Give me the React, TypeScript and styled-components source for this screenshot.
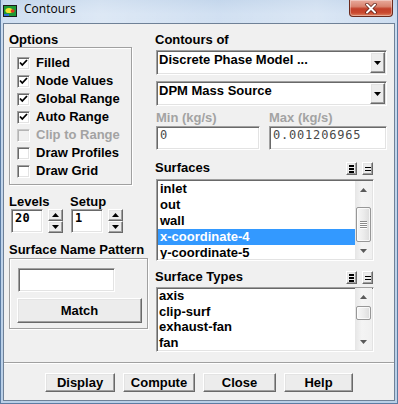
import React from 'react';
import styled, { createGlobalStyle, css } from 'styled-components';

const GlobalStyle = createGlobalStyle`
  html, body {
    margin: 0;
    padding: 0;
    background: #ffffff;
  }
  body {
    font-family: "Liberation Sans", Arial, sans-serif;
  }
  *, *::before, *::after {
    box-sizing: border-box;
  }
`;

// classic 3D edges
const sunken = css`
  border: 1px solid;
  border-color: #a0a0a0 #ffffff #ffffff #a0a0a0;
  box-shadow: inset 1px 1px 0 #696969, inset -1px -1px 0 #e3e3e3;
`;

const raised = css`
  border: 1px solid;
  border-color: #ffffff #696969 #696969 #ffffff;
  box-shadow: inset -1px -1px 0 #a0a0a0, inset 1px 1px 0 #e3e3e3;
  background: #ececec;
`;

const Window = styled.div`
  width: 398px;
  height: 404px;
  display: flex;
  flex-direction: column;
  padding: 0 2px 2px 2px;
  border: 1px solid #5b7ca3;
  border-top: none;
  background: linear-gradient(180deg, #bcd1e9 0%, #cbdcf0 14px, #c2d5eb 40%, #b9cfe7 100%);
`;

const TitleBar = styled.div`
  height: 23px;
  flex-shrink: 0;
  display: flex;
  align-items: flex-start;
  background: linear-gradient(
    90deg,
    rgba(255, 255, 255, 0.1) 0%,
    rgba(255, 255, 255, 0.35) 25%,
    rgba(255, 255, 255, 0.12) 55%,
    rgba(255, 255, 255, 0.3) 80%,
    rgba(255, 255, 255, 0.05) 100%
  );
`;

const AppIcon = styled.svg`
  margin-top: 5px;
  flex-shrink: 0;
`;

const Title = styled.div`
  margin: 1px 0 0 7px;
  font-family: "Open Sans", "Noto Sans", sans-serif;
  font-size: 12px;
  line-height: 16px;
  color: #000000;
`;

const CloseButton = styled.div`
  margin: 0 2px 0 auto;
  width: 44px;
  height: 17px;
  display: flex;
  align-items: center;
  justify-content: center;
  border: 1px solid #6b2a1c;
  border-top: none;
  border-radius: 0 0 4px 4px;
  background: linear-gradient(180deg, #e9aa9c 0%, #d98470 40%, #c2402a 55%, #c9492f 80%, #de8664 100%);
  box-shadow: inset 0 0 0 1px rgba(255, 255, 255, 0.35);
`;

const Client = styled.div`
  flex: 1;
  display: flex;
  flex-direction: column;
  background: #f0f0f0;
  border: 1px solid #6f8197;
`;

const Main = styled.div`
  flex: 1;
  display: flex;
  gap: 8px;
  padding: 8px 7px 0 5px;
`;

const LeftColumn = styled.div`
  width: 139px;
  display: flex;
  flex-direction: column;
`;

const RightColumn = styled.div`
  width: 231px;
  display: flex;
  flex-direction: column;
`;

const Label = styled.div<{ $disabled?: boolean; $top?: number; $shift?: number }>`
  font-size: 13px;
  font-weight: bold;
  line-height: 15px;
  white-space: nowrap;
  color: ${p => (p.$disabled ? '#a3a3a3' : '#000000')};
  margin-top: ${p => p.$top ?? 0}px;
  margin-left: ${p => p.$shift ?? 0}px;
`;

const GroupBox = styled.div<{ $width: number; $top?: number }>`
  width: ${p => p.$width}px;
  margin-top: ${p => p.$top ?? 0}px;
  border: 1px solid #a0a0a0;
  box-shadow: 1px 1px 0 #ffffff, inset 1px 1px 0 #ffffff;
  display: flex;
  flex-direction: column;
`;

const OptionList = styled.div`
  padding: 6px 0 4px 7px;
  display: flex;
  flex-direction: column;
`;

const CheckRow = styled.div<{ $disabled?: boolean }>`
  height: 18px;
  display: flex;
  align-items: center;
  gap: 6px;
  font-size: 13px;
  font-weight: bold;
  line-height: 18px;
  color: ${p => (p.$disabled ? '#a3a3a3' : '#000000')};
`;

const CheckBox = styled.div<{ $disabled?: boolean }>`
  width: 13px;
  height: 13px;
  flex-shrink: 0;
  display: flex;
  align-items: center;
  justify-content: center;
  ${sunken};
  background: ${p => (p.$disabled ? '#f0f0f0' : '#ffffff')};
  ${p =>
    p.$disabled &&
    css`
      border-color: #c8c8c8 #ffffff #ffffff #c8c8c8;
      box-shadow: inset 1px 1px 0 #b4b4b4, inset -1px -1px 0 #ececec;
    `}
`;

const SpinGrid = styled.div`
  display: grid;
  grid-template-columns: 61px 62px;
  margin-top: 9px;
`;

const SpinBox = styled.div<{ $inset: number }>`
  display: flex;
  gap: 5px;
  margin-left: ${p => p.$inset}px;
`;

const NumberField = styled.div<{ $width: number; $disabled?: boolean; $bold?: boolean }>`
  width: ${p => p.$width}px;
  height: 24px;
  ${sunken};
  background: #ffffff;
  padding: 1px 0 0 3px;
  font-family: "DejaVu Sans Mono", "Liberation Mono", monospace;
  font-size: 12px;
  font-weight: ${p => (p.$bold ? 'bold' : 'normal')};
  letter-spacing: ${p => (p.$bold ? 0.4 : 0.8)}px;
  line-height: 15px;
  color: ${p => (p.$disabled ? '#4a4a4a' : '#000000')};
`;

const SpinButtons = styled.div`
  width: 15px;
  height: 24px;
  display: flex;
  flex-direction: column;
`;

const SpinButton = styled.div`
  flex: 1;
  display: flex;
  align-items: center;
  justify-content: center;
  ${raised};
`;

const PatternBody = styled.div`
  padding: 9px 5px 5px 7px;
  display: flex;
  flex-direction: column;
  gap: 6px;
`;

const TextInput = styled.div`
  width: 97px;
  height: 24px;
  margin-left: 1px;
  ${sunken};
  background: #ffffff;
`;

const PushButton = styled.div<{ $width: number; $height: number }>`
  width: ${p => p.$width}px;
  height: ${p => p.$height}px;
  ${raised};
  display: flex;
  align-items: center;
  justify-content: center;
  font-size: 13px;
  font-weight: bold;
  color: #000000;
`;

const Combo = styled.div<{ $top: number }>`
  width: 231px;
  height: 25px;
  margin-top: ${p => p.$top}px;
  ${sunken};
  background: #ffffff;
  display: flex;
  padding: 1px 1px 1px 2px;
`;

const ComboText = styled.div`
  flex: 1;
  font-size: 13px;
  font-weight: bold;
  line-height: 15px;
  color: #000000;
`;

const ComboButton = styled.div`
  width: 15px;
  height: 21px;
  ${raised};
  display: flex;
  align-items: center;
  justify-content: center;
`;

const RangeRow = styled.div`
  display: flex;
  gap: 9px;
  margin-top: 4px;
`;

const RangeField = styled.div`
  display: flex;
  flex-direction: column;
  gap: 1px;
`;

const ListHeader = styled.div<{ $top: number }>`
  width: 218px;
  height: 18px;
  margin-top: ${p => p.$top}px;
  display: flex;
  align-items: flex-start;
`;

const HeaderButtons = styled.div`
  margin: 2px 1px 0 auto;
  display: flex;
  gap: 5px;
`;

const MiniButton = styled.div`
  width: 11px;
  height: 13px;
  ${raised};
  display: flex;
  align-items: center;
  justify-content: center;
`;

const ListBox = styled.div<{ $height: number; $top: number; $pad: number }>`
  width: 218px;
  height: ${p => p.$height}px;
  margin-top: ${p => p.$top}px;
  ${sunken};
  background: #ffffff;
  display: flex;
  padding: ${p => p.$pad}px 1px 1px ${p => p.$pad}px;
  overflow: hidden;
`;

const Items = styled.div`
  flex: 1;
  display: flex;
  flex-direction: column;
  overflow: hidden;
`;

const Item = styled.div<{ $selected?: boolean; $row: number }>`
  height: ${p => p.$row}px;
  flex-shrink: 0;
  padding-left: 2px;
  font-size: 13px;
  font-weight: bold;
  line-height: ${p => p.$row}px;
  white-space: nowrap;
  color: ${p => (p.$selected ? '#ffffff' : '#000000')};
  background: ${p => (p.$selected ? '#3399ff' : 'transparent')};
`;

const ScrollBar = styled.div`
  width: 17px;
  display: flex;
  flex-direction: column;
  background: linear-gradient(90deg, #e6e6e6, #f4f4f4 40%, #f0f0f0);
`;

const ScrollArrow = styled.div<{ $bottom?: boolean }>`
  height: 17px;
  flex-shrink: 0;
  margin-top: ${p => (p.$bottom ? 'auto' : '0')};
  display: flex;
  align-items: center;
  justify-content: center;
`;

const Thumb = styled.div<{ $height: number; $top: number }>`
  height: ${p => p.$height}px;
  margin: ${p => p.$top}px 1px 0 1px;
  flex-shrink: 0;
  border: 1px solid #979797;
  border-radius: 2px;
  background: linear-gradient(90deg, #f7f7f7, #ececec 50%, #dcdcdc);
  box-shadow: inset 0 0 0 1px rgba(255, 255, 255, 0.7);
  display: flex;
  flex-direction: column;
  align-items: center;
  justify-content: center;
  gap: 1px;
`;

const Grip = styled.div`
  width: 7px;
  height: 1px;
  background: #8a8a8a;
  box-shadow: 0 1px 0 #ffffff;
`;

const Footer = styled.div`
  display: flex;
  flex-direction: column;
`;

const Separator = styled.div`
  height: 2px;
  border-top: 1px solid #a0a0a0;
  border-bottom: 1px solid #ffffff;
`;

const ButtonBar = styled.div`
  display: flex;
  justify-content: center;
  gap: 8px;
  padding: 9px 0 8px 0;
`;

const Arrow: React.FC<{ dir: 'up' | 'down'; color?: string; w?: number; h?: number }> = ({
  dir,
  color = '#000000',
  w = 7,
  h = 4,
}) => (
  <svg width={w} height={h} viewBox={`0 0 ${w} ${h}`}>
    <polygon
      points={dir === 'down' ? `0,0 ${w},0 ${w / 2},${h}` : `0,${h} ${w},${h} ${w / 2},0`}
      fill={color}
    />
  </svg>
);

const Spinner: React.FC<{ value: string; inset: number }> = ({ value, inset }) => (
  <SpinBox $inset={inset}>
    <NumberField $width={32} $bold>
      {value}
    </NumberField>
    <SpinButtons>
      <SpinButton>
        <Arrow dir="up" w={7} h={4} />
      </SpinButton>
      <SpinButton>
        <Arrow dir="down" w={7} h={4} />
      </SpinButton>
    </SpinButtons>
  </SpinBox>
);

const ScrollTrack: React.FC<{ thumbTop: number; thumbHeight: number }> = ({ thumbTop, thumbHeight }) => (
  <ScrollBar>
    <ScrollArrow>
      <Arrow dir="up" color="#5a5a5a" w={7} h={4} />
    </ScrollArrow>
    <Thumb $top={thumbTop} $height={thumbHeight}>
      {thumbHeight > 20 && (
        <>
          <Grip />
          <Grip />
          <Grip />
          <Grip />
        </>
      )}
    </Thumb>
    <ScrollArrow $bottom>
      <Arrow dir="down" color="#5a5a5a" w={7} h={4} />
    </ScrollArrow>
  </ScrollBar>
);

const ListButtons: React.FC = () => (
  <HeaderButtons>
    <MiniButton>
      <svg width="5" height="8" viewBox="0 0 5 8">
        <rect x="0" y="0" width="5" height="2" fill="#000" />
        <rect x="0" y="3" width="5" height="2" fill="#000" />
        <rect x="0" y="6" width="5" height="2" fill="#000" />
      </svg>
    </MiniButton>
    <MiniButton>
      <svg width="6" height="4" viewBox="0 0 6 4">
        <rect x="0" y="0" width="6" height="1" fill="#000" />
        <rect x="0" y="3" width="6" height="1" fill="#000" />
      </svg>
    </MiniButton>
  </HeaderButtons>
);

const options = [
  { label: 'Filled', checked: true },
  { label: 'Node Values', checked: true },
  { label: 'Global Range', checked: true },
  { label: 'Auto Range', checked: true },
  { label: 'Clip to Range', checked: false, disabled: true },
  { label: 'Draw Profiles', checked: false },
  { label: 'Draw Grid', checked: false },
];

const surfaces = ['inlet', 'out', 'wall', 'x-coordinate-4', 'y-coordinate-5'];
const surfaceTypes = ['axis', 'clip-surf', 'exhaust-fan', 'fan'];

const footerButtons = [
  { label: 'Display', width: 70 },
  { label: 'Compute', width: 72 },
  { label: 'Close', width: 73 },
  { label: 'Help', width: 69 },
];

const App: React.FC = () => {
  return (
    <>
      <GlobalStyle />
      <Window>
        <TitleBar>
          <AppIcon width="14" height="12" viewBox="0 0 14 12">
            <rect x="0" y="0" width="14" height="12" fill="#1a1a1a" />
            <rect x="1" y="1" width="12" height="10" fill="#1f9a35" />
            <ellipse cx="6" cy="5.5" rx="3.6" ry="2.6" fill="#f0e42c" />
            <ellipse cx="9.6" cy="6" rx="2" ry="1.8" fill="#e2391f" />
            <rect x="1" y="9" width="5" height="2" fill="#2c6fd0" />
          </AppIcon>
          <Title>Contours</Title>
          <CloseButton>
            <svg width="12" height="11" viewBox="0 0 12 11">
              <path d="M2 1.5 L10 9.5 M10 1.5 L2 9.5" stroke="#5a1a10" strokeWidth="3.4" strokeLinecap="round" />
              <path d="M2 1.5 L10 9.5 M10 1.5 L2 9.5" stroke="#ffffff" strokeWidth="2" strokeLinecap="round" />
            </svg>
          </CloseButton>
        </TitleBar>

        <Client>
          <Main>
            <LeftColumn>
              <Label>Options</Label>
              <GroupBox $width={123}>
                <OptionList>
                  {options.map(o => (
                    <CheckRow key={o.label} $disabled={o.disabled}>
                      <CheckBox $disabled={o.disabled}>
                        {o.checked && (
                          <svg width="9" height="8" viewBox="0 0 9 8">
                            <polyline points="1,3.5 3.3,6 8,1" fill="none" stroke="#000" strokeWidth="1.8" />
                          </svg>
                        )}
                      </CheckBox>
                      {o.label}
                    </CheckRow>
                  ))}
                </OptionList>
              </GroupBox>

              <SpinGrid>
                <Label>Levels</Label>
                <Label>Setup</Label>
                <Spinner value="20" inset={2} />
                <Spinner value="1" inset={1} />
              </SpinGrid>

              <Label $top={9}>Surface Name Pattern</Label>
              <GroupBox $width={139} $top={1}>
                <PatternBody>
                  <TextInput />
                  <PushButton $width={125} $height={25}>
                    Match
                  </PushButton>
                </PatternBody>
              </GroupBox>
            </LeftColumn>

            <RightColumn>
              <Label $shift={-1}>Contours of</Label>
              <Combo $top={3}>
                <ComboText>Discrete Phase Model ...</ComboText>
                <ComboButton>
                  <Arrow dir="down" w={7} h={4} />
                </ComboButton>
              </Combo>
              <Combo $top={6}>
                <ComboText>DPM Mass Source</ComboText>
                <ComboButton>
                  <Arrow dir="down" w={7} h={4} />
                </ComboButton>
              </Combo>

              <RangeRow>
                <RangeField>
                  <Label $disabled>Min (kg/s)</Label>
                  <NumberField $width={104} $disabled>
                    0
                  </NumberField>
                </RangeField>
                <RangeField>
                  <Label $disabled>Max (kg/s)</Label>
                  <NumberField $width={118} $disabled>
                    0.001206965
                  </NumberField>
                </RangeField>
              </RangeRow>

              <ListHeader $top={10}>
                <Label $shift={-1}>Surfaces</Label>
                <ListButtons />
              </ListHeader>
              <ListBox $height={82} $top={1} $pad={1}>
                <Items>
                  {surfaces.map(s => (
                    <Item key={s} $row={16} $selected={s === 'x-coordinate-4'}>
                      {s}
                    </Item>
                  ))}
                </Items>
                <ScrollTrack thumbTop={9} thumbHeight={35} />
              </ListBox>

              <ListHeader $top={8}>
                <Label $shift={-1}>Surface Types</Label>
                <ListButtons />
              </ListHeader>
              <ListBox $height={65} $top={0} $pad={0}>
                <Items>
                  {surfaceTypes.map(s => (
                    <Item key={s} $row={15.5}>
                      {s}
                    </Item>
                  ))}
                </Items>
                <ScrollTrack thumbTop={1} thumbHeight={14} />
              </ListBox>
            </RightColumn>
          </Main>

          <Footer>
            <Separator />
            <ButtonBar>
              {footerButtons.map(b => (
                <PushButton key={b.label} $width={b.width} $height={19}>
                  {b.label}
                </PushButton>
              ))}
            </ButtonBar>
          </Footer>
        </Client>
      </Window>
    </>
  );
};

export default App;
